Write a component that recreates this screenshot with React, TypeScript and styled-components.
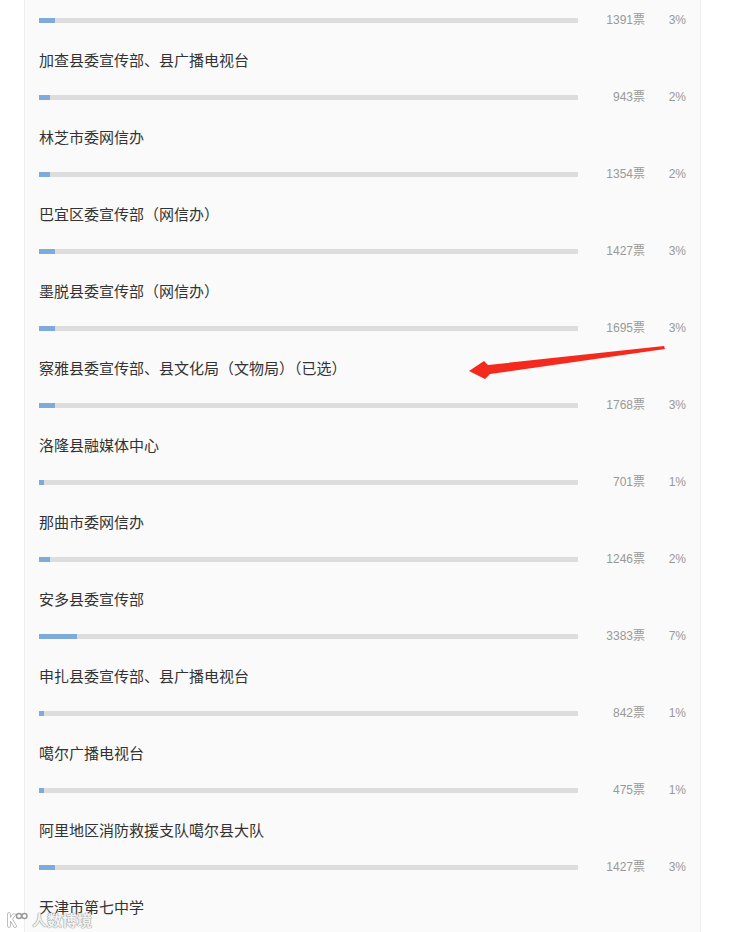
import styled, { createGlobalStyle } from 'styled-components'

const GlobalStyle = createGlobalStyle`
  html, body {
    margin: 0;
    padding: 0;
    background: #ffffff;
    overflow: hidden;
  }
  body {
    font-family: "Liberation Sans", "Noto Sans CJK SC", sans-serif;
  }
`

const Page = styled.div`
  position: relative;
  height: 932px;
  overflow: hidden;
`

const Panel = styled.div`
  margin-left: 24px;
  width: 677px;
  min-height: 932px;
  box-sizing: border-box;
  background: #fafafa;
  border-left: 1px solid #eeeeee;
  border-right: 1px solid #f0f0f0;
  padding: 12px 13px 0 14px;
`

const Item = styled.div`
  display: flex;
  flex-direction: column;
  padding-bottom: 22px;
`

const Title = styled.div`
  font-family: "Noto Sans CJK SC", sans-serif;
  font-size: 15px;
  line-height: 22px;
  color: #333333;
  margin-top: -1px;
  margin-bottom: 18px;
`

const BarRow = styled.div`
  display: flex;
  align-items: center;
  height: 16px;
`

const Track = styled.div`
  flex: 0 0 539px;
  height: 5px;
  background: #dddddd;
  display: flex;
`

const Fill = styled.div`
  height: 100%;
  background: #7eaadc;
`

const Count = styled.div`
  flex: 0 0 67px;
  text-align: right;
  font-size: 12px;
  color: #999999;
  line-height: 16px;
`

const Percent = styled.div`
  flex: 0 0 41px;
  text-align: right;
  font-size: 12px;
  color: #999999;
  line-height: 16px;
`

const Arrow = styled.svg`
  position: absolute;
  left: 0;
  top: 0;
  pointer-events: none;
`

const Watermark = styled.div`
  position: absolute;
  left: 6px;
  bottom: 2px;
  display: flex;
  align-items: center;
  gap: 4px;
  font-family: "Noto Sans CJK SC", sans-serif;
  font-size: 15px;
  font-weight: 700;
  color: rgba(255, 255, 255, 0.9);
  text-shadow: 0 0 1px #9a9a9a, 0 0 1px #9a9a9a, 0 0 1px #9a9a9a;
`

const items: { name?: string; votes: number; pct: number }[] = [
  { votes: 1391, pct: 3 },
  { name: '加查县委宣传部、县广播电视台', votes: 943, pct: 2 },
  { name: '林芝市委网信办', votes: 1354, pct: 2 },
  { name: '巴宜区委宣传部（网信办）', votes: 1427, pct: 3 },
  { name: '墨脱县委宣传部（网信办）', votes: 1695, pct: 3 },
  { name: '察雅县委宣传部、县文化局（文物局）（已选）', votes: 1768, pct: 3 },
  { name: '洛隆县融媒体中心', votes: 701, pct: 1 },
  { name: '那曲市委网信办', votes: 1246, pct: 2 },
  { name: '安多县委宣传部', votes: 3383, pct: 7 },
  { name: '申扎县委宣传部、县广播电视台', votes: 842, pct: 1 },
  { name: '噶尔广播电视台', votes: 475, pct: 1 },
  { name: '阿里地区消防救援支队噶尔县大队', votes: 1427, pct: 3 },
]

export default function App() {
  return (
    <>
      <GlobalStyle />
      <Page>
        <Panel>
          {items.map((it, i) => (
            <Item key={i}>
              {it.name && <Title>{it.name}</Title>}
              <BarRow>
                <Track>
                  <Fill style={{ width: `${it.pct}%` }} />
                </Track>
                <Count>{it.votes}票</Count>
                <Percent>{it.pct}%</Percent>
              </BarRow>
            </Item>
          ))}
          <Item>
            <Title>天津市第七中学</Title>
          </Item>
        </Panel>
        <Arrow width="732" height="932" viewBox="0 0 732 932">
          <polygon
            points="469,371 484,361 488,365 664,346 665,349 490,374 485,379"
            fill="#f52a1f"
          />
        </Arrow>
        <Watermark>
          <svg width="22" height="16" viewBox="0 0 22 16">
            <g stroke="#9a9a9a" strokeWidth="3.4" fill="none" strokeLinecap="round">
              <path d="M3 2 L3 14 M3 9 L8 3 M5 7 L9 14" />
            </g>
            <path
              d="M3 2 L3 14 M3 9 L8 3 M5 7 L9 14"
              stroke="#fff"
              strokeWidth="2.2"
              fill="none"
              strokeLinecap="round"
            />
            <circle cx="13" cy="4" r="2.5" stroke="#9a9a9a" strokeWidth="1.5" fill="#fff" />
            <circle cx="18.5" cy="4" r="2.5" stroke="#9a9a9a" strokeWidth="1.5" fill="#fff" />
          </svg>
          <span>人数博境</span>
        </Watermark>
      </Page>
    </>
  )
}
